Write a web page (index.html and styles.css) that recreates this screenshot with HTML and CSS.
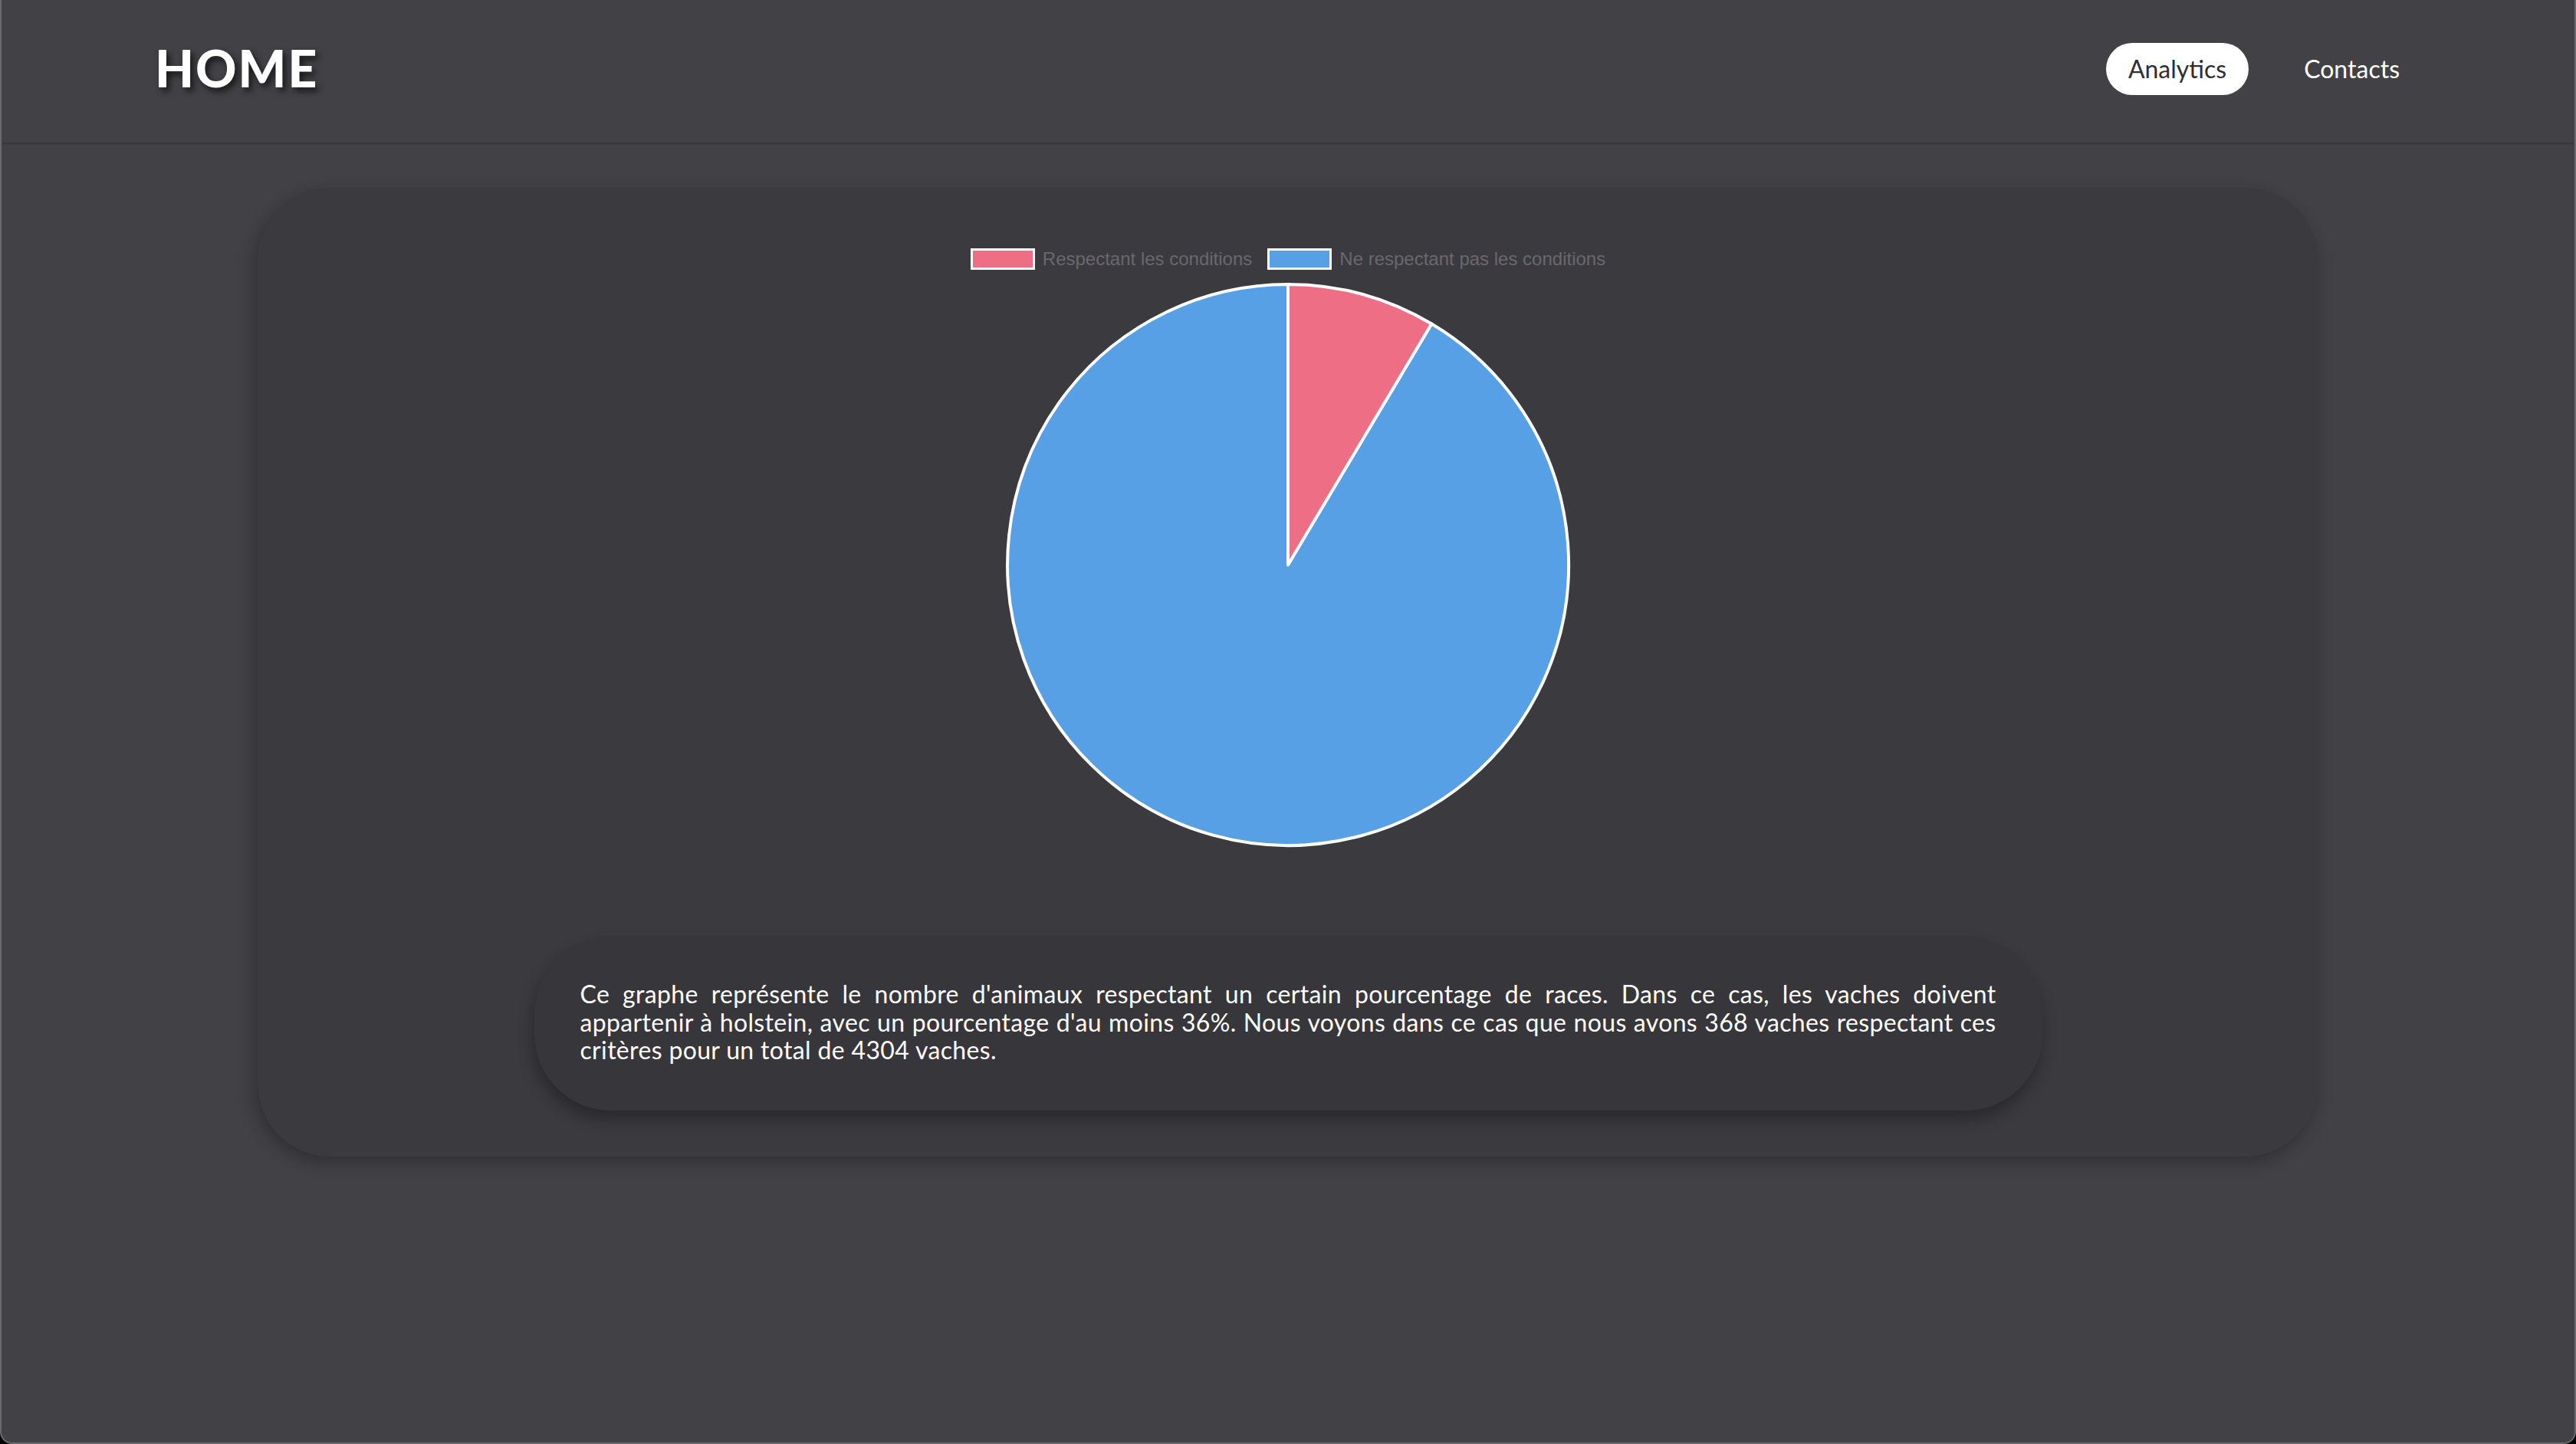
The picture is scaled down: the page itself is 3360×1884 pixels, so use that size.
FILE: index.html
```html
<!DOCTYPE html>
<html lang="fr">
<head>
<meta charset="utf-8">
<title>Home</title>
<link rel="stylesheet" href="styles.css">
</head>
<body>
<div class="window">
  <header class="topbar">
    <div class="brand">HOME</div>
    <nav class="nav">
      <a class="nav-link active" href="#">Analytics</a>
      <a class="nav-link" href="#">Contacts</a>
    </nav>
  </header>
  <main class="main">
    <section class="card">
      <div class="legend">
        <div class="legend-item"><span class="swatch pink"></span><span class="legend-label">Respectant les conditions</span></div>
        <div class="legend-item"><span class="swatch blue"></span><span class="legend-label">Ne respectant pas les conditions</span></div>
      </div>
      <svg class="pie" width="740" height="740" viewBox="0 0 740 740">
        <path d="M370 370 L557.3 55.5 A366 366 0 1 1 370 4 Z" fill="#57a0e5" stroke="#ffffff" stroke-width="4" stroke-linejoin="round"/>
        <path d="M370 370 L370 4 A366 366 0 0 1 557.3 55.5 Z" fill="#ed6e85" stroke="#ffffff" stroke-width="4" stroke-linejoin="round"/>
      </svg>
      <div class="description">
        <p>Ce graphe représente le nombre d'animaux respectant un certain pourcentage de races. Dans ce cas, les vaches doivent appartenir à holstein, avec un pourcentage d'au moins 36%. Nous voyons dans ce cas que nous avons 368 vaches respectant ces critères pour un total de 4304 vaches.</p>
      </div>
    </section>
  </main>
</div>
</body>
</html>
```

FILE: styles.css
```css
html {
  background: #000000;
}

body {
  margin: 0;
  font-family: "Lato", "Noto Sans", sans-serif;
  color: #ffffff;
}

.window {
  box-sizing: border-box;
  height: 1884px;
  background: #424146;
  border: 2px solid #6a6a6e;
  border-top: none;
  border-radius: 0 0 16px 16px;
  overflow: hidden;
}

.topbar {
  height: 186px;
  box-sizing: border-box;
  display: flex;
  align-items: center;
  justify-content: space-between;
  padding: 0 199px 0 200px;
  box-shadow: 0 2px 3px rgba(0, 0, 0, 0.18);
  position: relative;
}

.brand {
  font-size: 66px;
  font-weight: 900;
  letter-spacing: 2px;
  color: #ffffff;
  text-shadow: 4px 5px 8px rgba(0, 0, 0, 0.65);
  margin-top: -10px;
}

.nav {
  display: flex;
  align-items: center;
  gap: 43px;
  margin-top: -6px;
}

.nav-link {
  display: block;
  height: 68px;
  line-height: 68px;
  padding: 0 29px;
  border-radius: 34px;
  font-size: 32px;
  color: #ffffff;
  text-decoration: none;
}

.nav-link.active {
  background: #ffffff;
  color: #2f2e33;
}

.main {
  padding-top: 59px;
}

.card {
  width: 2688px;
  margin: 0 auto;
  box-sizing: border-box;
  padding: 79px 0 60px;
  background: #3b3a3f;
  border-radius: 95px;
  box-shadow: -4px 8px 22px rgba(0, 0, 0, 0.28);
  display: flex;
  flex-direction: column;
  align-items: center;
}

.legend {
  display: flex;
  align-items: center;
  gap: 20px;
  height: 28px;
}

.legend-item {
  display: flex;
  align-items: center;
  gap: 10px;
}

.swatch {
  display: block;
  box-sizing: border-box;
  width: 84px;
  height: 28px;
  border: 3px solid #ffffff;
}

.swatch.pink {
  background: #ed6e85;
}

.swatch.blue {
  background: #57a0e5;
}

.legend-label {
  font-family: "Liberation Sans", Arial, sans-serif;
  font-size: 24px;
  color: #69686d;
}

.pie {
  display: block;
  margin-top: 15px;
}

.description {
  width: 1967px;
  box-sizing: border-box;
  margin-top: 115px;
  padding: 57px 60px 60px;
  background: #37363b;
  border-radius: 100px;
  box-shadow: -2px 12px 20px rgba(0, 0, 0, 0.3);
}

.description p {
  margin: 0;
  font-size: 32px;
  line-height: 36.5px;
  letter-spacing: 0.34px;
  text-align: justify;
  color: #ffffff;
}
```
